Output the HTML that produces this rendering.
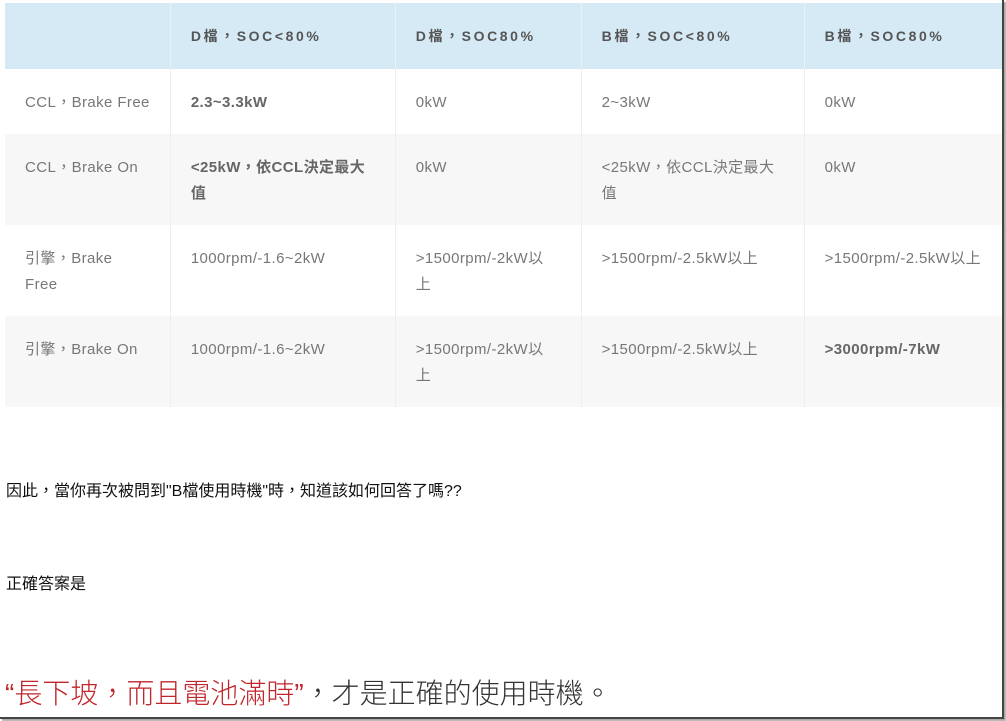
<!DOCTYPE html>
<html><head><meta charset="utf-8"><style>
*{margin:0;padding:0;box-sizing:border-box}
body{width:1006px;height:721px;background:#fff;position:relative;overflow:hidden;font-family:"Liberation Sans","Noto Sans CJK TC",sans-serif}
.frame{position:absolute;left:0;top:0;width:1004px;height:719px;border-right:2px solid #444;border-bottom:2px solid #444;box-shadow:2px 2px 1px #aaa}
table{position:absolute;left:5px;top:3px;width:997px;border-collapse:collapse;font-size:15px;letter-spacing:0.4px;color:#777}
td,th{vertical-align:top;text-align:left;padding:0 20px;line-height:26px;border-left:1px solid #eee;white-space:nowrap}
td:first-child,th:first-child{border-left:none}
th{background:#d6eaf5;color:#555;font-weight:bold;letter-spacing:2.6px;height:66px;padding-top:21px;line-height:24px;font-size:14px;border-left:1px solid #e8f2f8}
tr.r1 td{height:65px;padding-top:21px}
tr.r2 td{height:91px;padding-top:21px;background:#f7f7f7}
tr.r3 td{height:91px;padding-top:21px}
tr.r4 td{height:91px;padding-top:21px;background:#f7f7f7}
b{color:#666}
.p{position:absolute;left:6px;font-size:16px;color:#111}
.big{position:absolute;left:5px;top:672px;font-size:28px;color:#333;font-weight:300;font-family:"Liberation Sans","Noto Sans CJK TC",sans-serif}
.red{color:#c0262d}
</style></head><body>
<div class="frame"></div>
<table>
<colgroup><col style="width:165px"><col style="width:225px"><col style="width:186px"><col style="width:223px"><col style="width:198px"></colgroup>
<tr><th></th><th>D檔，SOC&lt;80%</th><th>D檔，SOC80%</th><th>B檔，SOC&lt;80%</th><th>B檔，SOC80%</th></tr>
<tr class="r1"><td>CCL，Brake Free</td><td><b>2.3~3.3kW</b></td><td>0kW</td><td>2~3kW</td><td>0kW</td></tr>
<tr class="r2"><td>CCL，Brake On</td><td><b>&lt;25kW，依CCL決定最大<br>值</b></td><td>0kW</td><td>&lt;25kW，依CCL決定最大<br>值</td><td>0kW</td></tr>
<tr class="r3"><td>引擎，Brake<br>Free</td><td>1000rpm/-1.6~2kW</td><td>&gt;1500rpm/-2kW以<br>上</td><td>&gt;1500rpm/-2.5kW以上</td><td style="padding-right:0">&gt;1500rpm/-2.5kW以上</td></tr>
<tr class="r4"><td>引擎，Brake On</td><td>1000rpm/-1.6~2kW</td><td>&gt;1500rpm/-2kW以<br>上</td><td>&gt;1500rpm/-2.5kW以上</td><td><b>&gt;3000rpm/-7kW</b></td></tr>
</table>
<div class="p" style="top:477px">因此，當你再次被問到"B檔使用時機"時，知道該如何回答了嗎??</div>
<div class="p" style="top:570px">正確答案是</div>
<div class="big"><span class="red">“長下坡，而且電池滿時”</span>，才是正確的使用時機。</div>
</body></html>
